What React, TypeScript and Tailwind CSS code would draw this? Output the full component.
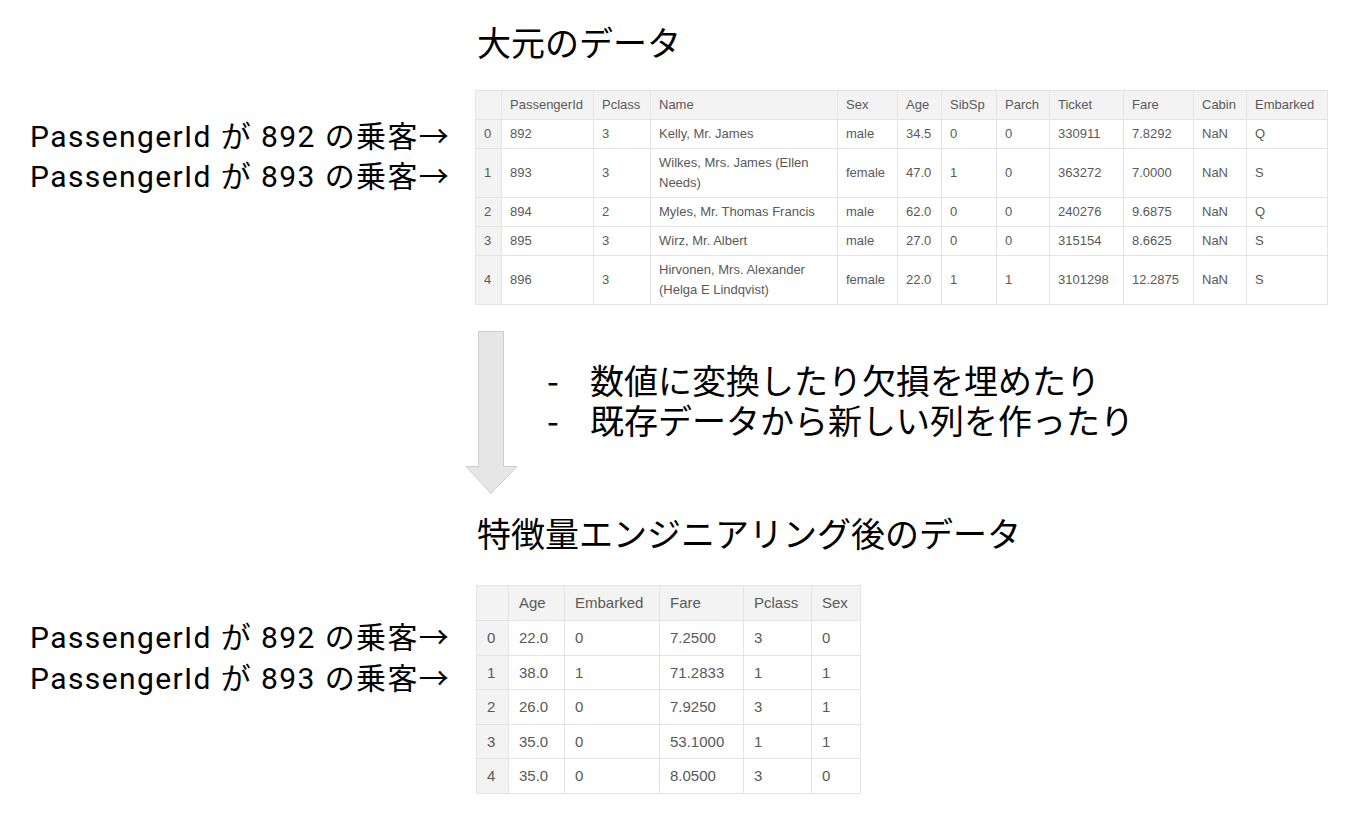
import React from "react";

const t1Cols = [
  { h: "", w: 26 },
  { h: "PassengerId", w: 92 },
  { h: "Pclass", w: 57 },
  { h: "Name", w: 187 },
  { h: "Sex", w: 60 },
  { h: "Age", w: 44 },
  { h: "SibSp", w: 55 },
  { h: "Parch", w: 53 },
  { h: "Ticket", w: 74 },
  { h: "Fare", w: 70 },
  { h: "Cabin", w: 53 },
  { h: "Embarked", w: 81 },
];

const t1Rows = [
  ["0", "892", "3", "Kelly, Mr. James", "male", "34.5", "0", "0", "330911", "7.8292", "NaN", "Q"],
  ["1", "893", "3", "Wilkes, Mrs. James (Ellen Needs)", "female", "47.0", "1", "0", "363272", "7.0000", "NaN", "S"],
  ["2", "894", "2", "Myles, Mr. Thomas Francis", "male", "62.0", "0", "0", "240276", "9.6875", "NaN", "Q"],
  ["3", "895", "3", "Wirz, Mr. Albert", "male", "27.0", "0", "0", "315154", "8.6625", "NaN", "S"],
  ["4", "896", "3", "Hirvonen, Mrs. Alexander (Helga E Lindqvist)", "female", "22.0", "1", "1", "3101298", "12.2875", "NaN", "S"],
];

const t2Cols = [
  { h: "", w: 32 },
  { h: "Age", w: 56 },
  { h: "Embarked", w: 95 },
  { h: "Fare", w: 84 },
  { h: "Pclass", w: 68 },
  { h: "Sex", w: 49 },
];

const t2Rows = [
  ["0", "22.0", "0", "7.2500", "3", "0"],
  ["1", "38.0", "1", "71.2833", "1", "1"],
  ["2", "26.0", "0", "7.9250", "3", "1"],
  ["3", "35.0", "0", "53.1000", "1", "1"],
  ["4", "35.0", "0", "8.0500", "3", "0"],
];

function Labels({ top, lh }: { top: string; lh: string }) {
  return (
    <div
      className={`w-[475px] shrink-0 pl-[30px] ${top} ${lh} text-[30px] text-black tracking-[1.4px] whitespace-nowrap font-['Roboto','Noto_Sans_CJK_JP',sans-serif]`}
    >
      <div>PassengerId が 892 の乗客→</div>
      <div>PassengerId が 893 の乗客→</div>
    </div>
  );
}

export default function App() {
  const big = "font-['Noto_Sans_CJK_JP','Noto_Sans',sans-serif]";
  const tbl = "font-['Liberation_Sans','Noto_Sans_CJK_JP',sans-serif]";
  return (
    <div className={`w-[1358px] h-[826px] bg-white overflow-hidden ${big} text-black`}>
      {/* Section 1 title */}
      <div className="pt-[22px] pl-[477px] text-[34px] leading-[40px]">大元のデータ</div>

      {/* Section 1 body */}
      <div className="flex mt-[28px]">
        <Labels top="pt-[27px]" lh="leading-[40px]" />
        <table className={`table-fixed border-collapse ${tbl} text-[13px] leading-[20px] text-[#595959]`}>
          <colgroup>
            {t1Cols.map((c, i) => (
              <col key={i} style={{ width: c.w }} />
            ))}
          </colgroup>
          <thead>
            <tr className="bg-[#f3f3f3]">
              {t1Cols.map((c, i) => (
                <th key={i} className="border border-[#e4e4e4] px-[8px] py-[4px] text-left font-normal whitespace-nowrap">
                  {c.h}
                </th>
              ))}
            </tr>
          </thead>
          <tbody>
            {t1Rows.map((r, ri) => (
              <tr key={ri}>
                {r.map((v, ci) => (
                  <td
                    key={ci}
                    className={`border border-[#e4e4e4] py-[4px] px-[8px] align-middle ${ci === 0 ? "bg-[#f3f3f3]" : "bg-white"} ${ci === 3 ? "" : "whitespace-nowrap"}`}
                  >
                    {v}
                  </td>
                ))}
              </tr>
            ))}
          </tbody>
        </table>
      </div>

      {/* Middle: arrow and notes */}
      <div className="flex pl-[465px] pt-[26px]">
        <svg width="53" height="164" viewBox="0 0 53 164" className="shrink-0">
          <polygon
            points="13.5,0.5 38.5,0.5 38.5,135.5 52,135.5 26,162.5 1,135.5 13.5,135.5"
            fill="#e6e6e6"
            stroke="#cdcdcd"
            strokeWidth="1"
          />
        </svg>
        <div className="ml-[29px] mt-[29px] text-[34px] leading-[40px] whitespace-nowrap">
          <div className="flex">
            <span className="w-[43px]">-</span>
            <span>数値に変換したり欠損を埋めたり</span>
          </div>
          <div className="flex">
            <span className="w-[43px]">-</span>
            <span>既存データから新しい列を作ったり</span>
          </div>
        </div>
      </div>

      {/* Section 2 title */}
      <div className="mt-[18px] pl-[477px] text-[34px] leading-[40px]">特徴量エンジニアリング後のデータ</div>

      {/* Section 2 body */}
      <div className="flex mt-[32px]">
        <Labels top="pt-[32px]" lh="leading-[41px]" />
        <table className={`table-fixed border-collapse ${tbl} text-[15px] text-[#595959] ml-[1px]`}>
          <colgroup>
            {t2Cols.map((c, i) => (
              <col key={i} style={{ width: c.w }} />
            ))}
          </colgroup>
          <thead>
            <tr className="bg-[#f3f3f3]">
              {t2Cols.map((c, i) => (
                <th key={i} className="border border-[#e4e4e4] px-[10px] py-[5px] leading-[24px] text-left font-normal whitespace-nowrap">
                  {c.h}
                </th>
              ))}
            </tr>
          </thead>
          <tbody>
            {t2Rows.map((r, ri) => (
              <tr key={ri}>
                {r.map((v, ci) => (
                  <td
                    key={ci}
                    className={`border border-[#e4e4e4] py-[5px] px-[10px] leading-[23.6px] whitespace-nowrap ${ci === 0 ? "bg-[#f3f3f3]" : "bg-white"}`}
                  >
                    {v}
                  </td>
                ))}
              </tr>
            ))}
          </tbody>
        </table>
      </div>
    </div>
  );
}
